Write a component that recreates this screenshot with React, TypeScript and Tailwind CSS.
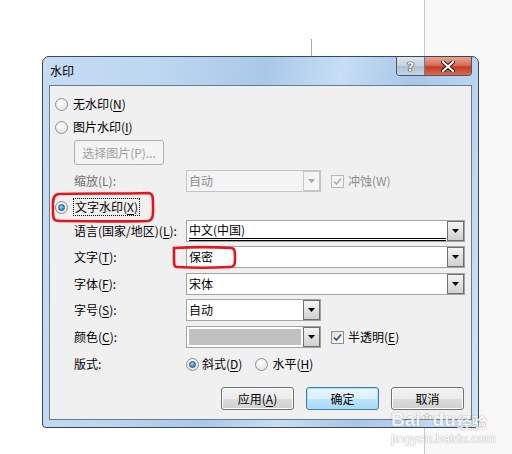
import React from 'react'

const font = { fontFamily: '"Noto Sans CJK SC", "Noto Sans", sans-serif' }

function Radio({ checked }: { checked?: boolean }) {
  return (
    <span className="relative flex h-[13px] w-[13px] shrink-0 items-center justify-center rounded-full border border-[#8f8f8f] bg-[radial-gradient(circle_at_40%_35%,#ffffff,#dcdcdc)]">
      {checked && (
        <span className="h-[7px] w-[7px] rounded-full border border-[#1c4f86] bg-[radial-gradient(circle_at_40%_35%,#8fd0ff,#1b6fc2)]" />
      )}
    </span>
  )
}

function Check({ disabled }: { disabled?: boolean }) {
  return (
    <span
      className={
        'flex h-[13px] w-[13px] shrink-0 items-center justify-center border ' +
        (disabled ? 'border-[#b8b8b8] bg-[#f4f4f4]' : 'border-[#8f8f8f] bg-[linear-gradient(135deg,#dcdcdc,#ffffff)]')
      }
    >
      <svg width="9" height="9" viewBox="0 0 9 9">
        <path
          d="M1 4.5 L3.5 7 L8 1.5"
          fill="none"
          stroke={disabled ? '#b0b0b0' : '#3a4f86'}
          strokeWidth="1.7"
        />
      </svg>
    </span>
  )
}

function Arrow({ disabled }: { disabled?: boolean }) {
  return (
    <div
      className={
        'flex h-full w-[17px] shrink-0 items-center justify-center border ' +
        (disabled
          ? 'border-[#c6c6c6] bg-[#f4f4f4]'
          : 'border-[#6f6f6f] bg-[linear-gradient(#f4f4f4,#e2e2e2_50%,#d0d0d0)]')
      }
    >
      <svg width="7" height="4" viewBox="0 0 7 4">
        <path d="M0 0 H7 L3.5 4 Z" fill={disabled ? '#a8a8a8' : '#000'} />
      </svg>
    </div>
  )
}

function Combo({
  wide,
  disabled,
  children,
}: {
  wide?: boolean
  disabled?: boolean
  children?: React.ReactNode
}) {
  return (
    <div
      className={
        'flex h-[22px] items-stretch border ' +
        (wide ? 'w-[279px] ' : 'w-[135px] ') +
        (disabled ? 'border-[#c4c4c4] bg-[#f4f4f4]' : 'border-[#a3a3a3] bg-white')
      }
    >
      <div className={'flex flex-1 items-center pl-[2px] ' + (disabled ? 'text-[#8d8d8d]' : 'text-black')}>
        {children}
      </div>
      <Arrow disabled={disabled} />
    </div>
  )
}

function Btn({ children, focused, disabled }: { children: React.ReactNode; focused?: boolean; disabled?: boolean }) {
  return (
    <div
      className={
        'flex items-center justify-center rounded-[3px] border ' +
        (disabled
          ? 'border-[#adb2b5] bg-[#f4f4f4] text-[#a0a0a0]'
          : focused
            ? 'border-[#3c7fb1] bg-[linear-gradient(#eaf6fd,#d9f0fc_50%,#bee6fd_51%,#a7d9f5)] text-black shadow-[inset_0_0_0_1px_#a6e0f7]'
            : 'border-[#707070] bg-[linear-gradient(#f2f2f2,#ebebeb_50%,#dddddd_51%,#cfcfcf)] text-black shadow-[inset_0_0_0_1px_#fcfcfc]')
      }
    >
      {children}
    </div>
  )
}

function Label({ children }: { children: React.ReactNode }) {
  return <span className="w-[112px] shrink-0">{children}</span>
}

const U = ({ children }: { children: React.ReactNode }) => <span className="underline underline-offset-2">{children}</span>

export default function App() {
  return (
    <div className="relative h-[454px] w-[512px] overflow-hidden bg-white text-[12px] leading-none text-black" style={font}>
      {/* background of the page behind the dialog */}
      <div className="absolute left-[424px] top-0 h-full w-[88px] border-l border-[#c9c9c9] bg-[#f8f8f8]" />
      <div className="absolute left-[311px] top-[39px] h-[17px] w-px bg-[#a8a8a8]" />

      {/* dialog window */}
      <div className="absolute left-[42px] top-[56px] flex h-[372px] w-[437px] flex-col rounded-t-[7px] rounded-b-[4px] border border-[#3b4754] bg-[linear-gradient(100deg,#c5dcf4_0%,#bcd6f1_25%,#a9c8e8_45%,#c6def6_60%,#a8c6e6_75%,#cfe4f8_100%)] px-[6px] pb-[6px]">
        <div className="flex h-[28px] shrink-0 items-start">
          <span className="mt-[8px] ml-[1px] flex-1 text-[12px]">水印</span>
          <div className="flex h-[19px] overflow-hidden rounded-b-[4px] border border-t-0 border-[#4a5866]">
            <div className="flex w-[28px] items-center justify-center border-r border-[#6d7c8c] bg-[linear-gradient(#dfe6ee,#c4d1de_50%,#aebfd0_51%,#c7d6e4)]">
              <span className="text-[13px] font-bold text-white [text-shadow:0_0_1px_#222,0_0_1px_#222,0_0_1px_#222]" style={{ fontFamily: '"DejaVu Sans", sans-serif' }}>
                ?
              </span>
            </div>
            <div className="flex w-[46px] items-center justify-center bg-[linear-gradient(#e8a493,#d7705c_45%,#c23d26_55%,#d96a4e)]">
              <svg width="14" height="11" viewBox="0 0 14 11">
                <path d="M2 1 L12 10 M12 1 L2 10" stroke="#3b1a14" strokeWidth="4" strokeLinecap="square" />
                <path d="M2 1 L12 10 M12 1 L2 10" stroke="#fff" strokeWidth="2" strokeLinecap="square" />
              </svg>
            </div>
          </div>
        </div>

        {/* client area */}
        <div className="flex h-[335px] flex-col border border-[#6b7a8a] bg-[#f0f0f0]">
          <div className="mt-[8px] flex h-[20px] items-center gap-[5px] pl-[5px]">
            <Radio />
            <span>
              无水印(<U>N</U>)
            </span>
          </div>
          <div className="mt-[3px] flex h-[20px] items-center gap-[5px] pl-[5px]">
            <Radio />
            <span>
              图片水印(<U>I</U>)
            </span>
          </div>
          <div className="mt-[3px] flex h-[25px] pl-[24px]">
            <div className="w-[90px]">
              <Btn disabled>
                <span className="flex h-[23px] items-center">选择图片(P)...</span>
              </Btn>
            </div>
          </div>
          <div className="mt-[5px] flex h-[22px] items-center pl-[24px]">
            <Label>
              <span className="text-[#6d6d6d]">缩放(L):</span>
            </Label>
            <Combo disabled>自动</Combo>
            <div className="ml-[10px] flex items-center gap-[4px] text-[#8d8d8d]">
              <Check disabled />
              <span>冲蚀(W)</span>
            </div>
          </div>
          <div className="mt-[5px] flex h-[20px] items-center gap-[5px] pl-[5px]">
            <Radio checked />
            <span className="border border-dotted border-black px-px py-[2px]">
              文字水印(<U>X</U>)
            </span>
          </div>
          <div className="mt-[3px] flex h-[22px] items-center pl-[24px]">
            <Label>
              语言(国家/地区)(<U>L</U>):
            </Label>
            <Combo wide>
              <div className="flex h-full flex-1 flex-col justify-center pr-[1px]">
                <span className="mt-[2px]">中文(中国)</span>
                <span className="mt-[2px] h-[3px] border-y border-black" />
              </div>
            </Combo>
          </div>
          <div className="mt-[4px] flex h-[22px] items-center pl-[24px]">
            <Label>
              文字(<U>T</U>):
            </Label>
            <Combo wide>保密</Combo>
          </div>
          <div className="mt-[5px] flex h-[22px] items-center pl-[24px]">
            <Label>
              字体(<U>F</U>):
            </Label>
            <Combo wide>宋体</Combo>
          </div>
          <div className="mt-[4px] flex h-[22px] items-center pl-[24px]">
            <Label>
              字号(<U>S</U>):
            </Label>
            <Combo>自动</Combo>
          </div>
          <div className="mt-[5px] flex h-[22px] items-center pl-[24px]">
            <Label>
              颜色(<U>C</U>):
            </Label>
            <Combo>
              <div className="mr-[2px] h-[16px] flex-1 bg-[#c0c0c0]" />
            </Combo>
            <div className="ml-[10px] flex items-center gap-[4px]">
              <Check />
              <span>
                半透明(<U>E</U>)
              </span>
            </div>
          </div>
          <div className="mt-[6px] flex h-[20px] items-center pl-[24px]">
            <Label>版式:</Label>
            <div className="flex items-center gap-[3px]">
              <Radio checked />
              <span>
                斜式(<U>D</U>)
              </span>
            </div>
            <div className="ml-[13px] flex items-center gap-[4px]">
              <Radio />
              <span>
                水平(<U>H</U>)
              </span>
            </div>
          </div>
          <div className="mt-[13px] flex h-[23px] justify-end gap-[12px] pr-[7px]">
            <div className="w-[73px]">
              <Btn>
                <span className="flex h-[21px] items-center">
                  应用(<U>A</U>)
                </span>
              </Btn>
            </div>
            <div className="w-[73px]">
              <Btn focused>
                <span className="flex h-[21px] items-center">确定</span>
              </Btn>
            </div>
            <div className="w-[73px]">
              <Btn>
                <span className="flex h-[21px] items-center">取消</span>
              </Btn>
            </div>
          </div>
        </div>
      </div>

      {/* red annotation marks */}
      <svg className="absolute left-[50px] top-[191px]" width="106" height="34" viewBox="0 0 106 34">
        <path
          d="M8 3 C35 2 70 3 98 2 C103 2 103 6 103 14 C103 22 104 29 98 30 C70 31 35 30 10 30 C4 30 3 28 3 22 C3 14 2 6 6 4 Z"
          fill="none"
          stroke="#e8141b"
          strokeWidth="2.6"
        />
      </svg>
      <svg className="absolute left-[171px] top-[244px]" width="68" height="27" viewBox="0 0 68 27">
        <path
          d="M3 4 C20 3 45 3 60 4 C64 4 64 8 64 14 C64 20 64 23 58 23 C40 24 22 24 6 23 C3 23 3 20 3 14 Z"
          fill="none"
          stroke="#e8141b"
          strokeWidth="2.6"
        />
      </svg>

      {/* site watermark */}
      <div className="absolute left-[391px] top-[410px] flex flex-col items-start opacity-75" style={{ fontFamily: '"Liberation Sans", sans-serif' }}>
        <div className="flex items-end text-[19px] font-bold leading-none text-white [text-shadow:0_0_1px_#8a8a8a,0_0_1px_#8a8a8a]">
          <span>Bai</span>
          <svg className="mb-[2px]" width="12" height="14" viewBox="0 0 14 16">
            <g fill="#fff" stroke="#9a9a9a" strokeWidth="0.8">
              <ellipse cx="3" cy="5" rx="1.8" ry="2.3" />
              <ellipse cx="7" cy="2.8" rx="1.8" ry="2.3" />
              <ellipse cx="11" cy="5" rx="1.8" ry="2.3" />
            </g>
          </svg>
          <span>du</span>
          <span className="ml-[1px] text-[15px]" style={font}>
            经验
          </span>
        </div>
        <span className="mt-[3px] text-[13px] leading-none text-white [text-shadow:0_0_1px_#9a9a9a,0_0_1px_#9a9a9a]">
          jingyan.baidu.com
        </span>
      </div>
    </div>
  )
}
